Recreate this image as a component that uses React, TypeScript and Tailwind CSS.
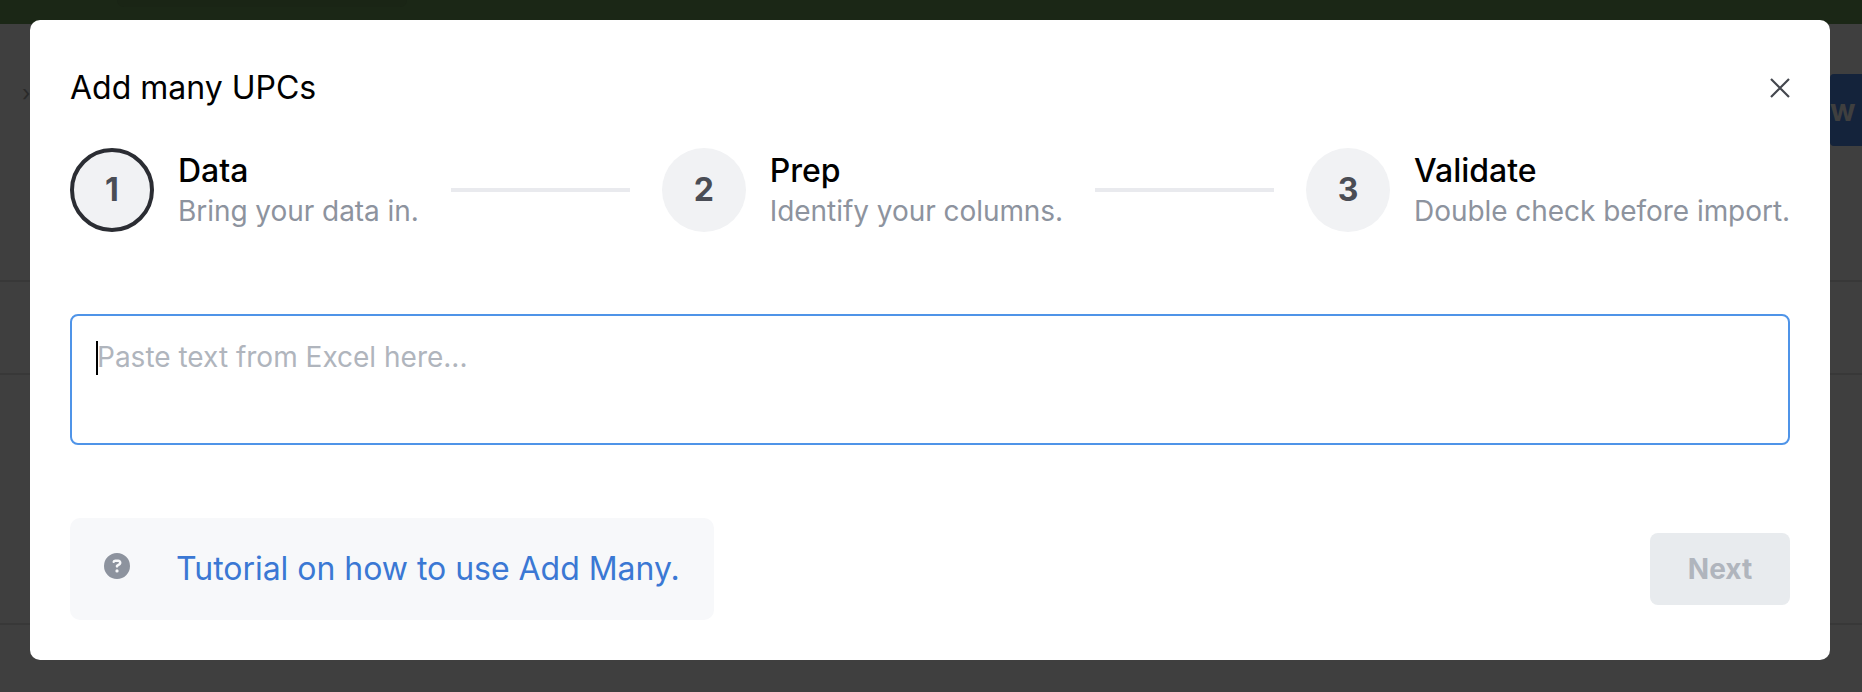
import { FaCircleQuestion } from "react-icons/fa6";

const steps = [
  { num: 1, title: "Data", hint: "Bring your data in.", active: true },
  { num: 2, title: "Prep", hint: "Identify your columns.", active: false },
  { num: 3, title: "Validate", hint: "Double check before import.", active: false },
];

function Step({ num, title, hint, active }: (typeof steps)[number]) {
  return (
    <div className="flex items-center gap-[24px] shrink-0">
      <div
        className={`w-[84px] h-[84px] rounded-full bg-[#f1f2f4] flex items-center justify-center text-[32px] font-bold text-[#4a4d55] ${
          active ? "border-[4px] border-[#2b2d33]" : ""
        }`}
      >
        {num}
      </div>
      <div className="pt-[2px]">
        <div className="text-[32px] leading-[40px] font-medium text-black">{title}</div>
        <div className="text-[28px] leading-[40px] tracking-[-0.05px] text-[#8d939e]">{hint}</div>
      </div>
    </div>
  );
}

export default function App() {
  return (
    <div className="relative w-[1862px] h-[692px] overflow-hidden bg-[#3f3f3f] font-['Inter',sans-serif]">
      {/* page behind the dialog */}
      <div className="h-[24px] bg-[#1b2716] pl-[117px]">
        <div className="w-[290px] h-[7px] rounded-b-lg bg-[#1a2515]" />
      </div>
      <div className="h-[258px] border-b-2 border-[#383838] flex items-start justify-between pt-[50px]">
        <div className="pl-[22px] pt-[8px] text-[#2a2a2a] text-[22px] leading-none">›</div>
        <div className="w-[32px] h-[72px] bg-[#14233b] rounded-l-sm flex items-center justify-start text-[30px] font-bold text-[#3f3f3f]">
          w
        </div>
      </div>
      <div className="h-[93px] border-b-2 border-[#383838]" />
      <div className="h-[250px] border-b-2 border-[#383838]" />

      {/* dialog */}
      <div className="absolute left-[30px] top-[20px] w-[1800px] h-[640px] bg-white rounded-[10px] px-[40px] pt-[48px] flex flex-col">
        <div className="flex items-center justify-between h-[40px]">
          <h2 className="text-[32px] leading-[40px] text-black">Add many UPCs</h2>
          <svg width="20" height="20" viewBox="0 0 20 20" stroke="#44474e" strokeWidth="2.2">
            <path d="M1 1 19 19M19 1 1 19" />
          </svg>
        </div>

        <div className="flex items-center mt-[40px]">
          <Step {...steps[0]} />
          <div className="flex-1 h-[4px] bg-[#e9eaee] mx-[32px]" />
          <Step {...steps[1]} />
          <div className="flex-1 h-[4px] bg-[#e9eaee] mx-[32px]" />
          <Step {...steps[2]} />
        </div>

        <div className="relative mt-[82px]">
          <textarea
            readOnly
            placeholder="Paste text from Excel here..."
            className="block w-full h-[131px] resize-none border-2 border-[#4f94e8] rounded-[8px] pl-[25px] pr-[25px] pt-[21px] text-[28px] leading-[40px] outline-none placeholder:text-[#b0b5bd] caret-transparent"
          />
          <div className="absolute left-[26px] top-[27px] w-[2px] h-[34px] bg-black" />
        </div>

        <div className="flex items-center justify-between mt-[73px]">
          <div className="h-[102px] w-[644px] rounded-[10px] bg-[#f7f8fa] flex items-center pl-[34px]">
            <FaCircleQuestion className="text-[#8d939e] w-[26px] h-[26px] -mt-[6px]" />
            <a className="ml-[46px] text-[32px] tracking-[-0.03px] text-[#3b78d4]">Tutorial on how to use Add Many.</a>
          </div>
          <button className="w-[140px] h-[72px] rounded-[8px] bg-[#e8ebee] text-[28px] font-bold text-[#b0b5bd]">
            Next
          </button>
        </div>
      </div>
    </div>
  );
}
